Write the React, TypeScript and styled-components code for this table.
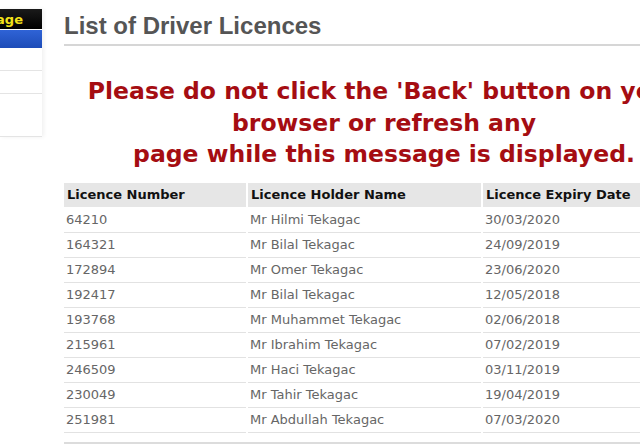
import styled, { createGlobalStyle } from "styled-components";

const GlobalStyle = createGlobalStyle`
  html, body {
    margin: 0;
    padding: 0;
    background: #fff;
    overflow: hidden;
  }
  body {
    width: 640px;
    height: 445px;
  }
`;

const licences = [
  { number: "64210", holder: "Mr Hilmi Tekagac", expiry: "30/03/2020" },
  { number: "164321", holder: "Mr Bilal Tekagac", expiry: "24/09/2019" },
  { number: "172894", holder: "Mr Omer Tekagac", expiry: "23/06/2020" },
  { number: "192417", holder: "Mr Bilal Tekagac", expiry: "12/05/2018" },
  { number: "193768", holder: "Mr Muhammet Tekagac", expiry: "02/06/2018" },
  { number: "215961", holder: "Mr Ibrahim Tekagac", expiry: "07/02/2019" },
  { number: "246509", holder: "Mr Haci Tekagac", expiry: "03/11/2019" },
  { number: "230049", holder: "Mr Tahir Tekagac", expiry: "19/04/2019" },
  { number: "251981", holder: "Mr Abdullah Tekagac", expiry: "07/03/2020" },
];

export default function App() {
  return (
    <>
      <GlobalStyle />
      <Page>
        <Sidebar>
          <MenuTitle>
            <span>Home Page</span>
          </MenuTitle>
          <MenuActive />
          <MenuItem $height={22} />
          <MenuItem $height={22} />
          <MenuItem $height={42} />
        </Sidebar>
        <Main>
          <Title>List of Driver Licences</Title>
          <Warning>
            Please do not click the 'Back' button on your
            <br />
            browser or refresh any
            <br />
            page while this message is displayed.
          </Warning>
          <Table>
            <thead>
              <tr>
                <Th style={{ width: 176 }}>Licence Number</Th>
                <Th style={{ width: 227 }}>Licence Holder Name</Th>
                <Th>Licence Expiry Date</Th>
              </tr>
            </thead>
            <tbody>
              {licences.map((l) => (
                <tr key={l.number + l.holder}>
                  <Td>{l.number}</Td>
                  <Td>{l.holder}</Td>
                  <Td>{l.expiry}</Td>
                </tr>
              ))}
            </tbody>
          </Table>
          <BottomRule />
        </Main>
      </Page>
    </>
  );
}

const Page = styled.div`
  display: flex;
  align-items: flex-start;
  width: 720px;
`;

const Sidebar = styled.div`
  width: 42px;
  flex-shrink: 0;
  margin-top: 9px;
  box-shadow: 2px 0 4px rgba(0, 0, 0, 0.06);
  overflow: hidden;
`;

const MenuTitle = styled.div`
  height: 20px;
  background: linear-gradient(#1a1a1a, #000);
  display: flex;
  justify-content: flex-end;
  align-items: center;
  overflow: hidden;

  span {
    font-family: "DejaVu Sans", Verdana, sans-serif;
    font-weight: bold;
    font-size: 13px;
    color: #f2e21a;
    white-space: nowrap;
    margin-right: 19px;
  }
`;

const MenuActive = styled.div`
  height: 18px;
  margin-top: 1px;
  background: linear-gradient(#2f63d6, #1d4cb8);
`;

const MenuItem = styled.div<{ $height: number }>`
  height: ${(p) => p.$height}px;
  border-bottom: 1px solid #e4e4e4;
`;

const Main = styled.div`
  margin-left: 22px;
  width: 640px;
  flex-shrink: 0;
`;

const Title = styled.h1`
  margin: 14px 0 0 0;
  padding-bottom: 6px;
  font-family: "Liberation Sans", Arial, sans-serif;
  font-size: 24px;
  font-weight: bold;
  color: #555;
  border-bottom: 2px solid #d6d6d6;
  line-height: 24px;
`;

const Warning = styled.p`
  margin: 30px 0 0 0;
  text-align: center;
  font-family: "DejaVu Sans", Verdana, sans-serif;
  font-weight: bold;
  font-size: 23.5px;
  line-height: 31.5px;
  color: #a50d12;
`;

const Table = styled.table`
  margin-top: 12px;
  margin-left: -2px;
  width: 100%;
  border-collapse: separate;
  border-spacing: 2px 0;
  font-family: "DejaVu Sans", Verdana, sans-serif;
  font-size: 13px;
`;

const Th = styled.th`
  background: #e6e6e6;
  color: #111;
  text-align: left;
  font-weight: bold;
  height: 24px;
  padding: 0 3px;
  border-bottom: 1px solid #fff;
`;

const Td = styled.td`
  color: #666;
  height: 24px;
  padding: 0 2px;
  border-bottom: 1px solid #e2e2e2;
`;

const BottomRule = styled.div`
  margin-top: 9px;
  height: 2px;
  background: #dcdcdc;
`;
